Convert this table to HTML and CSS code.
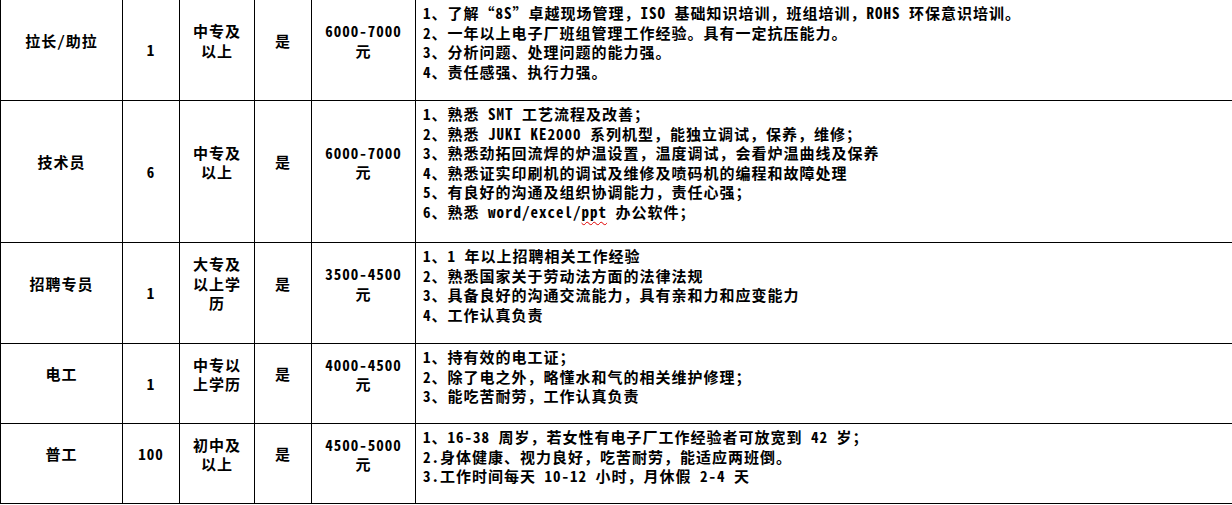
FILE: index.html
```html
<!DOCTYPE html>
<html lang="zh-CN">
<head>
<meta charset="utf-8">
<title>招聘岗位</title>
<link rel="stylesheet" href="styles.css">
</head>
<body>
<table class="jobs">
  <colgroup>
    <col class="c-name"><col class="c-num"><col class="c-edu"><col class="c-yes"><col class="c-pay"><col class="c-req">
  </colgroup>
  <tr class="r1">
    <td class="mid up">拉长/助拉</td>
    <td class="mid">1</td>
    <td class="mid up">中专及<br>以上</td>
    <td class="mid up">是</td>
    <td class="mid up">6000-7000<br>元</td>
    <td class="req">1、了解“8S”卓越现场管理，ISO 基础知识培训，班组培训，ROHS 环保意识培训。<br>2、一年以上电子厂班组管理工作经验。具有一定抗压能力。<br>3、分析问题、处理问题的能力强。<br>4、责任感强、执行力强。</td>
  </tr>
  <tr class="r2">
    <td class="mid up">技术员</td>
    <td class="mid">6</td>
    <td class="mid up">中专及<br>以上</td>
    <td class="mid up">是</td>
    <td class="mid up">6000-7000<br>元</td>
    <td class="req">1、熟悉 SMT 工艺流程及改善；<br>2、熟悉 JUKI KE2000 系列机型，能独立调试，保养，维修；<br>3、熟悉劲拓回流焊的炉温设置，温度调试，会看炉温曲线及保养<br>4、熟悉证实印刷机的调试及维修及喷码机的编程和故障处理<br>5、有良好的沟通及组织协调能力，责任心强；<br>6、熟悉 word/excel/<span class="spell">ppt</span> 办公软件；</td>
  </tr>
  <tr class="r3">
    <td class="mid up">招聘专员</td>
    <td class="mid">1</td>
    <td class="mid up">大专及<br>以上学<br>历</td>
    <td class="mid up">是</td>
    <td class="mid up">3500-4500<br>元</td>
    <td class="req">1、1 年以上招聘相关工作经验<br>2、熟悉国家关于劳动法方面的法律法规<br>3、具备良好的沟通交流能力，具有亲和力和应变能力<br>4、工作认真负责</td>
  </tr>
  <tr class="r4">
    <td class="mid up">电工</td>
    <td class="mid">1</td>
    <td class="mid up">中专以<br>上学历</td>
    <td class="mid up">是</td>
    <td class="mid up">4000-4500<br>元</td>
    <td class="req">1、持有效的电工证；<br>2、除了电之外，略懂水和气的相关维护修理；<br>3、能吃苦耐劳，工作认真负责</td>
  </tr>
  <tr class="r5">
    <td class="mid up">普工</td>
    <td class="mid up">100</td>
    <td class="mid up">初中及<br>以上</td>
    <td class="mid up">是</td>
    <td class="mid up">4500-5000<br>元</td>
    <td class="req">1、16-38 周岁，若女性有电子厂工作经验者可放宽到 42 岁；<br>2.身体健康、视力良好，吃苦耐劳，能适应两班倒。<br>3.工作时间每天 10-12 小时，月休假 2-4 天</td>
  </tr>
</table>
</body>
</html>
```

FILE: styles.css
```css
html, body {
  margin: 0;
  padding: 0;
  background: #ffffff;
  overflow: hidden;
}

.jobs {
  border-collapse: collapse;
  table-layout: fixed;
  width: 1260px;
  margin-top: -1px;
  font-family: "Noto Sans Mono CJK SC", "Noto Sans CJK SC", sans-serif;
  font-weight: bold;
  font-size: 15px;
  letter-spacing: 1px;
  line-height: 19.5px;
  color: #000;
}

.c-name { width: 122px; }
.c-num { width: 57px; }
.c-edu { width: 75px; }
.c-yes { width: 57px; }
.c-pay { width: 104px; }

.jobs td {
  border: 1px solid #000;
  padding: 0;
}

.jobs td.mid {
  text-align: center;
  vertical-align: middle;
}

.jobs td.up {
  padding-bottom: 19px;
}

.jobs td.req {
  vertical-align: top;
  text-align: left;
  padding: 3px 0 0 7px;
  white-space: nowrap;
}

.r1 td { height: 100px; }
.r2 td { height: 141px; }
.r3 td { height: 100px; }
.r4 td { height: 79px; }
.r5 td { height: 80px; }

.jobs td.up, .jobs td.req { box-sizing: border-box; }

.spell {
  text-decoration: underline wavy #e00000;
  text-decoration-thickness: 1px;
  text-underline-offset: 3px;
}
```
